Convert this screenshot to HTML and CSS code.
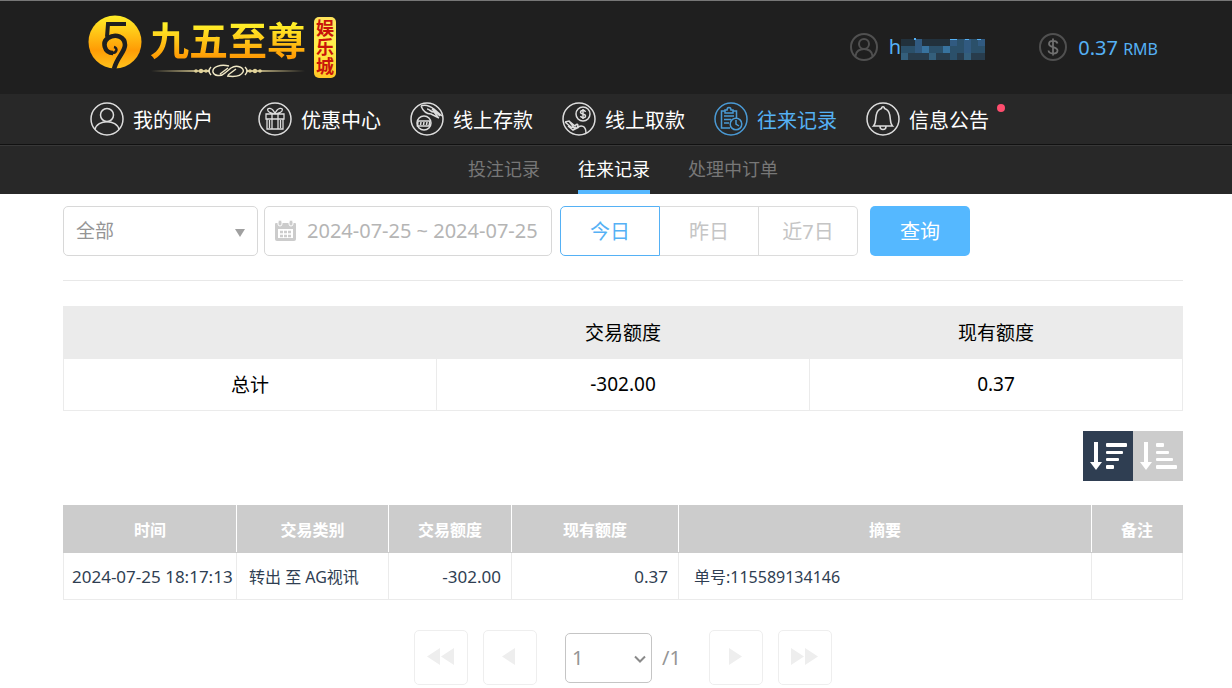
FILE: index.html
```html
<!DOCTYPE html>
<html lang="zh-CN">
<head>
<meta charset="utf-8">
<meta name="viewport" content="width=device-width, initial-scale=1">
<title>往来记录</title>
<link rel="stylesheet" href="styles.css">
</head>
<body>
<header class="top">
  <div class="brand">
    <svg class="emblem" viewBox="0 0 54 54" aria-hidden="true">
      <defs><linearGradient id="gold" x1="0" y1="0" x2="0" y2="1"><stop offset="0" stop-color="#ffee28"/><stop offset=".65" stop-color="#ff9c05"/><stop offset="1" stop-color="#ffc21c"/></linearGradient></defs>
      <circle cx="27" cy="27" r="26.5" fill="url(#gold)"/>
      <path d="M38 9H20L19 22" fill="none" stroke="#1f1f1f" stroke-width="4"/>
      <path d="M25 38C16 38 14 27 20 23C28 18 37 22 37 30C37 37 29 42 26 54" fill="none" stroke="#1f1f1f" stroke-width="4.600"/>
      <path d="M24 38C29 38 30 33 26 32" fill="none" stroke="#1f1f1f" stroke-width="2.500"/>
    </svg>
    <div class="brand-words">
      <span class="brand-name">九五至尊</span>
      <svg class="flourish" viewBox="0 0 154 14" aria-hidden="true">
        <defs><linearGradient id="lineL"><stop offset="0" stop-color="#d9c88a" stop-opacity="0"/><stop offset="1" stop-color="#e0d29a"/></linearGradient><linearGradient id="lineR"><stop offset="0" stop-color="#e0d29a"/><stop offset="1" stop-color="#d9c88a" stop-opacity="0"/></linearGradient></defs>
        <rect y="6" width="58" height="2" fill="url(#lineL)"/><rect x="96" y="6" width="58" height="2" fill="url(#lineR)"/>
        <g fill="#e0d29a"><circle cx="45" cy="7" r="1.800"/><circle cx="50" cy="7" r="2.200"/><circle cx="55" cy="7" r="1.800"/><circle cx="99" cy="7" r="1.800"/><circle cx="104" cy="7" r="2.200"/><circle cx="109" cy="7" r="1.800"/></g>
        <path d="M60 3Q56 7 60 11M94 3Q98 7 94 11M78 2C69 0 61 3 62 8C63 12 70 13 74 9L80 4C86 0 94 4 92 8C90 12 83 13 76 12M69 10L77 4M77 11L85 5" fill="none" stroke="#eee6c4" stroke-width="1.500"/>
      </svg>
    </div>
    <span class="brand-tag">娱乐城</span>
  </div>
  <div class="account">
    <div class="account-item">
      <svg class="round-icon" viewBox="0 0 28 28" aria-hidden="true"><g fill="none" stroke="#505050" stroke-width="2"><circle cx="14" cy="14" r="13"/><circle cx="14" cy="11" r="5"/><path d="M5.500 23C6 13.500 22 13.500 22.500 23"/></g></svg>
      <span class="user">h<svg class="mosaic" viewBox="0 0 84 22" shape-rendering="crispEdges" aria-hidden="true">
        <rect y="1" width="84" height="21" fill="#2b506a"/>
        <g fill="#22313c"><rect y="1" width="14" height="7"/><rect x="21" y="1" width="28" height="7"/></g>
        <g fill="#315a80"><rect x="14" y="1" width="7" height="14"/><rect x="49" y="1" width="7" height="7"/><rect x="63" y="1" width="7" height="14"/><rect x="77" y="1" width="7" height="7"/></g>
        <g fill="#38739f"><rect x="21" y="8" width="7" height="7"/><rect x="42" y="8" width="7" height="7"/></g>
        <g fill="#283c4c"><rect x="7" y="15" width="21" height="7"/><rect x="35" y="15" width="14" height="7"/><rect x="56" y="15" width="7" height="7"/><rect x="70" y="15" width="14" height="7"/></g>
        <g fill="#345f7c"><rect y="15" width="7" height="7"/><rect x="28" y="15" width="7" height="7"/><rect x="63" y="15" width="7" height="7"/></g>
        <g fill="#55b1f5"><rect x="13" width="2" height="2"/><rect x="49" y="1" width="7" height="1"/><rect x="64" y="1" width="4" height="1"/><rect x="76" y="1" width="4" height="1"/></g>
      </svg></span>
    </div>
    <div class="account-item">
      <svg class="round-icon" viewBox="0 0 28 28" aria-hidden="true"><g fill="none" stroke="#505050" stroke-width="2"><circle cx="14" cy="14" r="13"/></g><path d="M18.500 10.500C17.500 7 10 7 10 11C10 15 18.500 13 18.500 17.500C18.500 21.500 10 21.500 9.500 17.500M14 5.500V22.500" fill="none" stroke="#707070" stroke-width="1.800"/></svg>
      <span class="balance">0.37 <small>RMB</small></span>
    </div>
  </div>
</header>

<nav class="main-nav" aria-label="主菜单">
  <a href="#" class="nav-link nav-first"><svg viewBox="0 0 34 34" aria-hidden="true"><circle cx="17" cy="17" r="16"/><circle cx="17" cy="13" r="6.500"/><path d="M5 27.500C7 17 27 17 29 27.500"/></svg>我的账户</a>
  <a href="#" class="nav-link"><svg viewBox="0 0 34 34" aria-hidden="true"><circle cx="17" cy="17" r="16"/><path d="M8 12H26V17H8ZM9 17V27H25V17M14 12V27M20 12V27M17 12C15 5 8 5 10 9C11 11 14 11 17 12C19 5 26 5 24 9C23 11 20 11 17 12M11.500 18V26M22.500 18V26" stroke-width="1.300"/></svg>优惠中心</a>
  <a href="#" class="nav-link"><svg viewBox="0 0 34 34" aria-hidden="true"><circle cx="17" cy="17" r="16"/><path d="M11 4C15 2 20 4 24 7L32 14M11 4C13 9 17 12 21 12L29 16M17 7C20 7 20 10 24 10L28 15M22 7L30 14"/><circle cx="14" cy="21" r="7"/><path d="M8 19H20L19 24H7.500ZM11 20L10.500 23M14 20L13.500 23M17 20L16.500 23"/></svg>线上存款</a>
  <a href="#" class="nav-link"><svg viewBox="0 0 34 34" aria-hidden="true"><circle cx="17" cy="17" r="16"/><circle cx="21" cy="12" r="7"/><path d="M23.500 10C22.500 7.500 18.500 8 18.500 10.500C18.500 12.500 23.500 11.500 23.500 14C23.500 16.500 19 16 18.500 14M21 7V17M3 20L7 19L13 24C15 21 17 22 15 26C19 22 24 24 24 31M3 20L9 25L15 26L11 28L6 24M7 19L13 27"/></svg>线上取款</a>
  <a href="#" class="nav-link active" aria-current="page"><svg viewBox="0 0 34 34" aria-hidden="true"><circle cx="17" cy="17" r="16"/><path d="M11 9H7.500V26H16M19 9H22.500V16M11 8H13C13 4.500 17 4.500 17 8H19V11H11ZM10 14H20M10 17.500H17M10 21H15"/><circle cx="22" cy="22" r="5.800"/><path d="M22 18V22L25 24"/></svg>往来记录</a>
  <a href="#" class="nav-link"><svg viewBox="0 0 34 34" aria-hidden="true"><circle cx="17" cy="17" r="16"/><path d="M7.500 24H26.500C23.500 21 25 17 23.500 12C22.500 8 20 7 18.500 6.500C18.500 4 15.500 4 15.500 6.500C14 7 11.500 8 10.500 12C9 17 10.500 21 7.500 24ZM14 24.500C14 28.500 20 28.500 20 24.500"/></svg>信息公告<span class="dot"></span></a>
</nav>
<nav class="sub-nav" aria-label="记录分类">
  <a href="#">投注记录</a>
  <a href="#" class="current" aria-current="page">往来记录</a>
  <a href="#">处理中订单</a>
</nav>

<main class="content">
  <form class="filters">
    <div class="kind">
      <select aria-label="交易类别"><option>全部</option></select>
      <svg class="caret" viewBox="0 0 10 8" aria-hidden="true"><path d="M0 0H10L5 8Z" fill="#a0a0a0"/></svg>
    </div>
    <label class="dates">
      <svg viewBox="0 0 21 21" aria-hidden="true"><path d="M1 3H20Q21 3 21 4V19Q21 21 19 21H2Q0 21 0 19V4Q0 3 1 3Z" fill="#ccc"/><path d="M3 9H18V18H3Z" fill="#fff"/><rect x="3" y="0" width="4" height="6" rx="2" fill="#ccc" stroke="#fff"/><rect x="14" y="0" width="4" height="6" rx="2" fill="#ccc" stroke="#fff"/><path d="M5 12H16M5 16H16" stroke="#ccc" stroke-width="2.500" stroke-dasharray="3 1"/></svg>
      <input type="text" value="2024-07-25 ~ 2024-07-25" aria-label="日期范围" readonly>
    </label>
    <div class="ranges">
      <button type="button" class="selected">今日</button><button type="button">昨日</button><button type="button">近7日</button>
    </div>
    <button type="button" class="query">查询</button>
  </form>

  <table class="summary">
    <thead><tr><td></td><th scope="col">交易额度</th><th scope="col">现有额度</th></tr></thead>
    <tbody><tr><th scope="row">总计</th><td>-302.00</td><td>0.37</td></tr></tbody>
  </table>

  <div class="sorting">
    <button type="button" class="on" aria-label="降序"><svg viewBox="0 0 50 50" aria-hidden="true"><path d="M11 11H15V31H19L13 39L7 31H11Z"/><rect x="23" y="12" width="21" height="4" rx="1"/><rect x="23" y="20" width="17" height="3" rx="1"/><rect x="23" y="27" width="13" height="3" rx="1"/><rect x="23" y="34" width="8" height="4" rx="1"/></svg></button>
    <button type="button" aria-label="升序"><svg viewBox="0 0 50 50" aria-hidden="true"><path d="M11 11H15V31H19L13 39L7 31H11Z"/><rect x="23" y="12" width="8" height="4" rx="1"/><rect x="23" y="20" width="13" height="3" rx="1"/><rect x="23" y="27" width="17" height="3" rx="1"/><rect x="23" y="34" width="21" height="4" rx="1"/></svg></button>
  </div>

  <table class="records">
    <colgroup><col class="c-time"><col class="c-kind"><col class="c-amount"><col class="c-balance"><col><col class="c-note"></colgroup>
    <thead><tr><th>时间</th><th>交易类别</th><th>交易额度</th><th>现有额度</th><th>摘要</th><th>备注</th></tr></thead>
    <tbody><tr><td class="time">2024-07-25 18:17:13</td><td class="type">转出 至 AG视讯</td><td class="num">-302.00</td><td class="num">0.37</td><td class="digest">单号:115589134146</td><td></td></tr></tbody>
  </table>

  <div class="pager">
    <button type="button" aria-label="首页"><svg viewBox="0 0 28 18" aria-hidden="true"><path d="M13 0V17L0 8.500ZM27 0V17L14 8.500Z"/></svg></button>
    <button type="button" aria-label="上一页"><svg viewBox="0 0 28 18" aria-hidden="true"><path d="M19 0V17L6 8.500Z"/></svg></button>
    <div class="page-pick">
      <span class="page-box"><select aria-label="页码"><option>1</option></select><svg viewBox="0 0 12 8" aria-hidden="true"><path d="M1 1.500L6 6.500L11 1.500" fill="none" stroke="#8a8a8a" stroke-width="2"/></svg></span>
      <span>/1</span>
    </div>
    <button type="button" aria-label="下一页"><svg viewBox="0 0 28 18" aria-hidden="true"><path d="M7 0V17L20 8.500Z"/></svg></button>
    <button type="button" aria-label="末页"><svg viewBox="0 0 28 18" aria-hidden="true"><path d="M0 0V17L13 8.500ZM14 0V17L27 8.500Z"/></svg></button>
  </div>
</main>
</body>
</html>
```
FILE: styles.css
```css
* { box-sizing: border-box; }
body {
  margin: 0;
  background: #fff;
  color: #000;
  font-family: "Noto Sans", "Noto Sans CJK SC", sans-serif;
  font-size: 20px;
}
button, input, select { font: inherit; margin: 0; padding: 0; cursor: pointer; }
a { text-decoration: none; }
svg { display: block; flex: none; }

.top {
  display: flex;
  align-items: center;
  justify-content: space-between;
  height: 94px;
  padding: 0 74px 1px 88px;
  border-top: 1px solid #777;
  background: #1f1f1f;
}
.brand { display: flex; align-items: center; gap: 8px; }
.emblem { width: 54px; height: 54px; margin-bottom: 10px; }
.brand-words { display: flex; flex-direction: column; align-items: center; }
.brand-name {
  font-size: 39px;
  font-weight: 700;
  line-height: 48px;
  background: linear-gradient(#ffee28 20%, #ff9c05 85%);
  background-clip: text;
  -webkit-background-clip: text;
  color: transparent;
}
.flourish { width: 154px; height: 14px; }
.brand-tag {
  width: 22px;
  padding: 2px 2px;
  border-radius: 5px;
  background: linear-gradient(#ffe45c, #fff04a 50%, #ffc626);
  color: #c8140a;
  font-size: 18px;
  font-weight: 700;
  line-height: 19px;
  word-break: break-all;
}
.account { display: flex; gap: 54px; color: #55b1f5; }
.account-item { display: flex; align-items: center; gap: 11px; }
.round-icon { width: 28px; height: 28px; }
.user { display: flex; align-items: center; line-height: 28px; }
.mosaic { width: 84px; height: 22px; margin-top: 4px; }
.balance small { font-size: 16px; }

.main-nav {
  display: flex;
  gap: 29px;
  height: 51px;
  padding: 0 90px;
  background: #282828;
  border-bottom: 1px solid #111;
}
.nav-link {
  position: relative;
  display: flex;
  align-items: center;
  gap: 9px;
  color: #fff;
  white-space: nowrap;
}
.nav-first { margin-right: 16px; }
.nav-link svg { width: 34px; height: 34px; fill: none; stroke: #ddd; stroke-width: 1.5; }
.nav-link.active { color: #55b1f5; }
.nav-link.active svg { stroke: #4a9ad5; }
.dot {
  position: absolute;
  top: 10px;
  right: -16px;
  width: 8px;
  height: 8px;
  border-radius: 50%;
  background: #ff4d6e;
}
.sub-nav {
  display: flex;
  justify-content: center;
  gap: 38px;
  height: 49px;
  padding-left: 14px;
  border-top: 1px solid #383838;
  background: #282828;
  font-size: 18px;
  line-height: 46px;
}
.sub-nav a { color: #777; border-bottom: 4px solid transparent; }
.sub-nav .current { color: #fff; border-color: #55b8ff; }

.content { padding: 12px 49px 0 63px; }
.filters {
  display: flex;
  padding-bottom: 24px;
  border-bottom: 1px solid #e8e8e8;
}
.kind { position: relative; width: 195px; height: 50px; margin-right: 6px; }
.kind select {
  width: 100%;
  height: 100%;
  padding-left: 12px;
  appearance: none;
  border: 1px solid #d8d8d8;
  border-radius: 5px;
  background: #fff;
  color: #959595;
  font-size: 19px;
}
.caret { position: absolute; right: 13px; top: 23px; width: 10px; height: 8px; pointer-events: none; }
.dates {
  display: flex;
  align-items: center;
  gap: 11px;
  width: 288px;
  margin-right: 8px;
  padding: 0 8px 2px 10px;
  border: 1px solid #d8d8d8;
  border-radius: 5px;
}
.dates svg { width: 21px; height: 21px; }
.dates input { flex: 1; min-width: 0; border: 0; outline: 0; background: none; color: #b5b5b5; }
.ranges { display: flex; width: 298px; margin-right: 12px; }
.ranges button {
  flex: 1;
  padding-bottom: 2px;
  border: 1px solid #dcdcdc;
  border-left: 0;
  background: #fff;
  color: #c5c5c5;
}
.ranges button:first-child { border-radius: 5px 0 0 5px; }
.ranges button:last-child { border-radius: 0 5px 5px 0; }
.ranges .selected { border: 1px solid #55b1f5; color: #55b1f5; }
.query { width: 100px; padding-bottom: 2px; border: 0; border-radius: 5px; background: #55b8ff; color: #fff; }

table { width: 100%; border-collapse: collapse; table-layout: fixed; }
.summary { margin-top: 25px; font-size: 19px; text-align: center; }
.summary th { font-weight: 400; }
.summary thead td, .summary thead th { background: #ebebeb; }
.summary tr > * { height: 52px; padding: 0 0 1px; border: 1px solid #ebebeb; }

.sorting { display: flex; justify-content: flex-end; margin: 20px 0 24px; }
.sorting button { width: 50px; height: 50px; border: 0; background: #ccc; }
.sorting .on { background: #2f3e52; }
.sorting svg { width: 50px; height: 50px; fill: #fff; }

.records { font-size: 17px; color: #2f3e52; }
.c-time { width: 173px; }
.c-kind { width: 152px; }
.c-amount { width: 123px; }
.c-balance { width: 167px; }
.c-note { width: 91px; }
.records th { height: 47px; padding: 0; border: 1px solid #ccc; background: #ccc; color: #fff; font-size: 16px; }
.records th:not(:last-child) { border-right-color: #fff; }
.records td { height: 47px; padding: 0 12px; border: 1px solid #ebebeb; white-space: nowrap; }
.records .time { padding: 0 0 0 8px; }
.records .type, .records .digest { font-size: 16px; }
.records .num { padding-right: 10px; text-align: right; }
.records .digest { padding-left: 15px; }

.pager { display: flex; justify-content: center; align-items: center; gap: 15px; margin-top: 30px; }
.pager button {
  display: grid;
  place-items: center;
  width: 54px;
  height: 55px;
  padding-bottom: 2px;
  border: 1px solid #eee;
  border-radius: 5px;
  background: #fff;
}
.pager button svg { width: 28px; height: 18px; fill: #eee; }
.page-pick { display: flex; align-items: center; gap: 10px; padding: 0 13px; color: #959595; }
.page-box { position: relative; }
.page-box select {
  display: block;
  width: 87px;
  height: 50px;
  padding-left: 6px;
  appearance: none;
  border: 1px solid #c5c5c5;
  border-radius: 5px;
  background: #fff;
  color: #959595;
}
.page-box svg { position: absolute; right: 6px; top: 22px; width: 12px; height: 8px; pointer-events: none; }
```
